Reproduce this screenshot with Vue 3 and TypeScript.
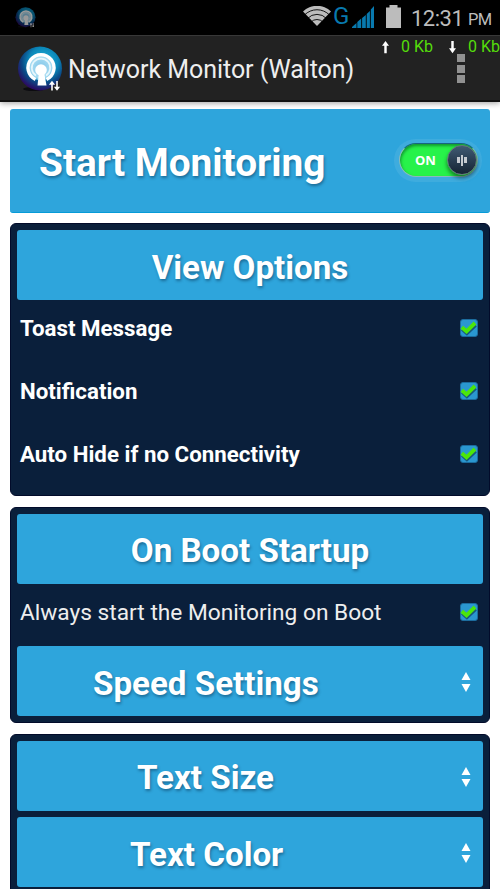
<script setup lang="ts">
import { ref } from 'vue'

interface Option { label: string; on: boolean }

const viewOptions = ref<Option[]>([
  { label: 'Toast Message', on: true },
  { label: 'Notification', on: true },
  { label: 'Auto Hide if no Connectivity', on: true },
])
const boot = ref<Option>({ label: 'Always start the Monitoring on Boot', on: true })
</script>

<template>
  <svg class="defs" width="0" height="0" aria-hidden="true">
    <defs>
      <radialGradient id="orb" cx="58%" cy="34%" r="66%">
        <stop offset="0" stop-color="#1fb4dc" />
        <stop offset=".5" stop-color="#0a86b8" />
        <stop offset=".74" stop-color="#0b4a86" />
        <stop offset="1" stop-color="#2a0c62" />
      </radialGradient>
      <radialGradient id="glow">
        <stop offset="0" stop-color="#7fc4e8" />
        <stop offset=".8" stop-color="#a8dcf2" />
        <stop offset="1" stop-color="#4fb4dc" />
      </radialGradient>
      <symbol id="logo" viewBox="0 0 46 46">
        <ellipse cx="17" cy="43" rx="11" ry="2" fill="#0c0c10" />
        <circle cx="23" cy="22.500" r="22" fill="url(#orb)" />
        <circle cx="24" cy="21.500" r="13" fill="url(#glow)" />
        <path d="M18.500 33.500A13 13 0 1 1 29.500 33.500" fill="none" stroke="#fff" stroke-width="3.400" />
        <path d="M19 29.500A9.200 9.200 0 1 1 29 29.500" fill="none" stroke="#e6f6fc" stroke-width="1.600" />
        <circle cx="24" cy="24" r="5.800" fill="#fff" />
        <path d="M22 26h5l2.500 13.500h-9z" fill="#fff" />
        <path d="M35 44.500v-8M33.500 38l1.500-2 1.500 2zM40 35v8M38.500 41.500l1.500 2 1.500-2z" fill="#fff" stroke="#fff" stroke-width="1.600" />
      </symbol>
      <symbol id="check" viewBox="0 0 18 18">
        <rect x=".5" y=".5" width="17" height="17" rx="2.500" fill="#2a97d0" stroke="#1c6c9e" />
        <path d="M2 9 6.500 13 15 5" fill="none" stroke="#17577c" stroke-width="4" transform="translate(.4 1)" />
        <path d="M1.800 8.300 6.500 12.300 15 4" fill="none" stroke="#4be60a" stroke-width="3.900" />
      </symbol>
      <symbol id="sort" viewBox="0 0 10 20">
        <path d="M5 0 9.500 8H.5zM.5 12h9L5 20z" fill="#fff" />
      </symbol>
    </defs>
  </svg>

  <div class="screen">
    <header class="status">
      <svg class="mini"><use href="#logo" /></svg>
      <svg class="wifi" viewBox="0 0 28 20">
        <path d="M0 5.500A20 20 0 0 1 28 5.500L14 20Z" fill="#bcbcbc" />
        <path d="M1.500 9A17.500 17.500 0 0 1 26.500 9M4.500 12.500A13 13 0 0 1 23.500 12.500M8 16A8.500 8.500 0 0 1 20 16" fill="none" stroke="#000" stroke-width=".9" />
      </svg>
      <span class="net">G</span>
      <svg class="signal" viewBox="0 0 22 22">
        <path d="M0 22v-1l4.500-4v5zM5.300 22v-6l3.900-3.500v9.500zM10.100 22v-10l3.700-3v13zM14.700 22V8l3.200-3v17zM18.800 22V3.500L22 0v22z" fill="#0879ae" />
      </svg>
      <svg class="battery" viewBox="0 0 15 23"><path d="M3.500 0h8v2.500H15V23H0V2.500h3.500z" fill="#bcbcbc" /></svg>
      <span class="clock">12:31</span><span class="pm">PM</span>
    </header>

    <div class="bar">
      <svg class="logo"><use href="#logo" /></svg>
      <h1>Network Monitor (Walton)</h1>
      <div class="rates">
        <svg class="arrow" viewBox="0 0 8 14"><path d="M4 0 8 5.500H5.400V14H2.600V5.500H0z" fill="#fff" /></svg>
        <span>0 Kb</span>
        <svg class="arrow down" viewBox="0 0 8 14"><path d="M4 14 0 8.500h2.600V0h2.800v8.500H8z" fill="#fff" /></svg>
        <span>0 Kb</span>
      </div>
      <div class="menu"><i /><i /><i /></div>
    </div>

    <main>
      <section class="start">
        <b>Start Monitoring</b>
        <div class="switch">
          <div class="track"><span>ON</span><div class="knob"><i /><i class="tall" /><i /></div></div>
        </div>
      </section>

      <section class="panel first">
        <div class="head"><b class="view">View Options</b></div>
        <div v-for="o in viewOptions" :key="o.label" class="row" @click="o.on = !o.on">
          <span class="strong">{{ o.label }}</span>
          <svg class="check"><use v-if="o.on" href="#check" /></svg>
        </div>
      </section>

      <section class="panel second">
        <div class="head"><b class="boot">On Boot Startup</b></div>
        <div class="row" @click="boot.on = !boot.on">
          <span class="plain">{{ boot.label }}</span>
          <svg class="check"><use v-if="boot.on" href="#check" /></svg>
        </div>
        <div class="head pick"><b class="speed">Speed Settings</b><svg class="sort"><use href="#sort" /></svg></div>
      </section>

      <section class="panel third">
        <div class="head pick"><b class="size">Text Size</b><svg class="sort"><use href="#sort" /></svg></div>
        <div class="head pick"><b class="color">Text Color</b><svg class="sort"><use href="#sort" /></svg></div>
      </section>
    </main>
  </div>
</template>

<style>
body { margin: 0; overflow: hidden; }
</style>

<style scoped>
* { box-sizing: border-box; }
.defs { position: absolute; }
.screen { width: 500px; height: 889px; overflow: hidden; background: #fff; font-family: Roboto, "Liberation Sans", sans-serif; white-space: nowrap; display: flex; flex-direction: column; }
.status { height: 35px; flex: none; background: #000; display: flex; align-items: center; color: #bcbcbc; }
.status > * { flex: none; }
.mini { width: 21px; height: 21px; margin-left: 15px; opacity: .6; }
.wifi { width: 28px; height: 20px; margin: -3px 0 0 267px; }
.net { color: #0879ae; font-size: 24px; line-height: 35px; width: 17px; margin-left: 2px; margin-top: -2px; }
.signal { width: 22px; height: 22px; margin: -2px 0 0 2px; }
.battery { width: 15px; height: 23px; margin: -2px 0 0 12px; }
.clock { font-size: 22px; line-height: 35px; margin-left: 10px; width: 51px; letter-spacing: -.5px; margin-top: 1px; }
.pm { font-size: 16.5px; line-height: 35px; margin: 4px 0 0 6px; letter-spacing: -.6px; }
.bar { position: relative; height: 67px; flex: none; background: #222; border-top: 1px solid #383838; border-bottom: 2px solid #111; display: flex; box-shadow: 0 1px 6px rgba(0,0,0,.4); }
.logo { width: 46px; height: 46px; margin: 10px 0 0 17px; }
h1 { margin: 0 0 0 5px; font-size: 25px; font-weight: 400; line-height: 67px; color: #eee; letter-spacing: -.05px; }
.rates { position: absolute; top: 0; left: 382px; display: flex; align-items: center; height: 20px; color: #55dd0b; font-size: 16px; }
.arrow { width: 7px; height: 14px; margin-top: 1px; }
.rates span { margin-left: 12px; width: 48px; }
.menu { position: absolute; left: 457px; top: 18px; display: grid; gap: 2.5px; }
.menu i { width: 8px; height: 8px; background: #919191; }
main { flex: 1; padding: 7px 10px 0; display: flex; flex-direction: column; }
b { color: #fff; font-weight: 700; text-shadow: 1px 2px 3px rgba(0,30,60,.42); }
.start { height: 104px; flex: none; background: #2ea5dc; border-radius: 3px; border-bottom: 1px solid #069bd8; display: flex; align-items: center; padding-left: 29px; }
.start b { font-size: 38.8px; width: 356px; margin-top: 3px; }
.switch { width: 88px; height: 43px; border-radius: 22px; background: rgba(255,255,255,.08); padding: 4px 5px; margin-left: -1px; }
.track { width: 79px; height: 34px; border-radius: 17px; background: #27f24a; border: 1px solid #8bb7bf; border-top-color: #176681; box-shadow: inset 1px 2px 3px rgba(0,80,30,.55); display: flex; align-items: center; padding-left: 15px; }
.track span { color: #fff; font: 700 13px "Open Sans", sans-serif; width: 32px; }
.knob { flex: none; width: 30px; height: 30px; border-radius: 50%; background: linear-gradient(#3f5a73, #152433); border: 1px solid #65727c; display: flex; align-items: center; justify-content: center; gap: 1px; box-shadow: 0 3px 4px rgba(0,0,0,.5); }
.knob i { width: 2.5px; height: 6px; background: #c6cbd0; }
.knob .tall { height: 11px; }
.panel { flex: none; margin-top: 10px; background: #0a1f3b; border: 1px solid #020b2a; border-radius: 6px; padding: 6px; }
.first { height: 273px; }
.second { height: 216px; margin-top: 11px; }
.second .row { height: 62px; padding-bottom: 5px; }
.third { height: 165px; margin-top: 11px; }
.head { height: 70px; background: #2ea5dc; border-radius: 3px; display: flex; align-items: center; justify-content: center; font-size: 33.15px; }
.head b { margin-top: 4px; }
.boot { position: relative; top: -1px; }
.pick { justify-content: flex-start; }
.third .pick b { margin-top: 2px; }
.pick + .pick { margin-top: 6px; }
.third .pick .color { margin-top: 4px; }
.sort { width: 10px; height: 20px; margin-left: auto; margin-right: 12px; margin-top: 2px; }
.row { height: 63px; display: flex; align-items: center; justify-content: space-between; padding: 0 5px 6px 3px; color: #fff; font-size: 22.3px; }
.strong { font-weight: 700; margin-top: -1px; }
.plain { color: #eee; font-size: 22.7px; margin-top: -1px; }
.check { width: 18px; height: 18px; margin-top: -1px; }
.speed { margin-left: 76px; }
.size { margin-left: 120px; }
.color { margin-left: 113px; }
</style>
